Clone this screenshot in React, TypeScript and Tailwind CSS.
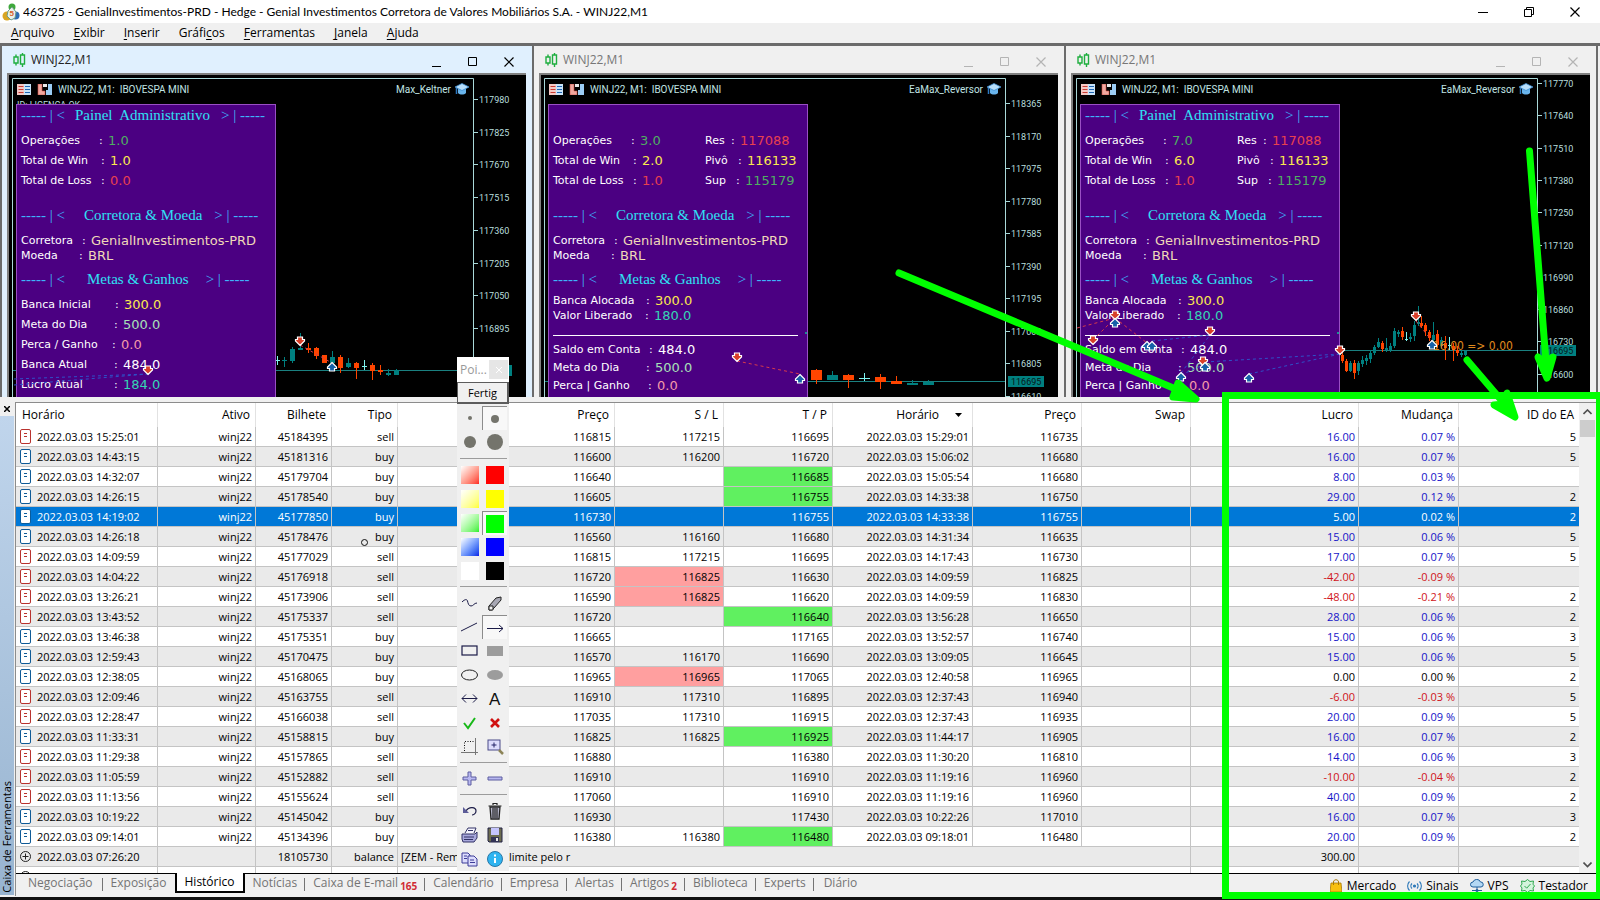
import React from "react";

type Candle = [x: number, high: number, low: number, top: number, bottom: number, kind: "u" | "d" | "n"];
type Marker = [x: number, y: number, dir: "up" | "down"];
type Trail = [x1: number, y1: number, x2: number, y2: number, color: string];

interface PanelRow {
  label: string;
  labelWidth: string;
  value: string;
  color: string;
  height: string;
  side?: { label: string; labelWidth: string; value: string; color: string };
}

interface ChartData {
  active?: boolean;
  expert: string;
  license?: boolean;
  prices: number[];
  firstTick: number;
  tickStep: number;
  priceLine: number;
  candleWidth: number;
  candles: Candle[];
  markers: Marker[];
  trails: Trail[];
  adminTitle: boolean;
  totals: PanelRow[];
  goals: PanelRow[];
  balances: PanelRow[];
  note?: string;
}

const GREEN = "text-[#4fae62]";
const YELLOW = "text-[#fbe94e]";
const RED = "text-[#e8414f]";
const WHITE = "text-white";
const PALE = "text-[#a8e0b8]";
const PINK = "text-[#f49aa8]";
const TEAL = "text-[#35d6b4]";
const BLUE_LINE = "#2f50c8";
const RED_LINE = "#d83a4a";

const totals = (ops: string, win: string, loss: string): PanelRow[] => [
  { label: "Operações", labelWidth: "w-[78px]", value: ops, color: GREEN, height: "h-5" },
  { label: "Total de Win", labelWidth: "w-[80px]", value: win, color: YELLOW, height: "h-5" },
  { label: "Total de Loss", labelWidth: "w-[80px]", value: loss, color: RED, height: "h-5" },
];

const withPivots = (rows: PanelRow[]): PanelRow[] => [
  { ...rows[0], side: { label: "Res", labelWidth: "w-[26px]", value: "117088", color: RED } },
  { ...rows[1], side: { label: "Pivô", labelWidth: "w-[33px]", value: "116133", color: YELLOW } },
  { ...rows[2], side: { label: "Sup", labelWidth: "w-[31px]", value: "115179", color: GREEN } },
];

const allocated: PanelRow[] = [
  { label: "Banca Alocada", labelWidth: "w-[93px]", value: "300.0", color: YELLOW, height: "h-[15px]" },
  { label: "Valor Liberado", labelWidth: "w-[92px]", value: "180.0", color: TEAL, height: "h-[15px]" },
];

const accountRows: PanelRow[] = [
  { label: "Saldo em Conta", labelWidth: "w-[96px]", value: "484.0", color: WHITE, height: "h-[18px]" },
  { label: "Meta do Dia", labelWidth: "w-[93px]", value: "500.0", color: PALE, height: "h-[18px]" },
  { label: "Perca | Ganho", labelWidth: "w-[95px]", value: "0.0", color: PINK, height: "h-[18px]" },
];

const charts: ChartData[] = [
  {
    active: true,
    expert: "Max_Keltner",
    license: true,
    prices: [117980, 117825, 117670, 117515, 117360, 117205, 117050, 116895],
    firstTick: 24,
    tickStep: 32.7,
    priceLine: 295,
    candleWidth: 5,
    candles: [
      [268, 281, 290, 285, 286, "n"], [275, 282, 292, 285, 286, "u"], [283, 272, 288, 274, 286, "u"],
      [291, 258, 275, 273, 275, "u"], [299, 268, 278, 273, 275, "d"], [307, 272, 284, 273, 281, "d"],
      [315, 280, 288, 280, 288, "d"], [323, 276, 290, 282, 288, "u"], [331, 280, 298, 282, 293, "d"],
      [339, 283, 293, 288, 292, "u"], [347, 287, 304, 288, 293, "d"], [355, 285, 295, 291, 292, "n"],
      [363, 288, 305, 290, 296, "d"], [371, 290, 300, 295, 297, "d"], [379, 294, 301, 298, 300, "u"],
      [387, 294, 300, 295, 300, "u"],
    ],
    markers: [[291, 266, "down"], [323, 292, "up"], [139, 295, "down"]],
    trails: [[5, 304, 139, 299, BLUE_LINE], [5, 310, 139, 299, BLUE_LINE], [291, 270, 323, 288, RED_LINE]],
    adminTitle: true,
    totals: totals("1.0", "1.0", "0.0"),
    goals: [
      { label: "Banca Inicial", labelWidth: "w-[94px]", value: "300.0", color: YELLOW, height: "h-5" },
      { label: "Meta do Dia", labelWidth: "w-[93px]", value: "500.0", color: PALE, height: "h-5" },
      { label: "Perca / Ganho", labelWidth: "w-[91px]", value: "0.0", color: PINK, height: "h-5" },
      { label: "Banca Atual", labelWidth: "w-[93px]", value: "484.0", color: WHITE, height: "h-5" },
      { label: "Lucro Atual", labelWidth: "w-[93px]", value: "184.0", color: TEAL, height: "h-5" },
    ],
    balances: [],
  },
  {
    expert: "EaMax_Reversor",
    prices: [118365, 118170, 117975, 117780, 117585, 117390, 117195, 117000, 116805, 116610],
    firstTick: 28,
    tickStep: 32.5,
    priceLine: 306,
    candleWidth: 11,
    candles: [
      [275, 294, 309, 295, 305, "d"], [291, 296, 305, 300, 305, "u"], [307, 299, 313, 300, 305, "d"],
      [323, 298, 306, 303, 304, "n"], [339, 299, 314, 302, 307, "d"], [355, 301, 309, 306, 309, "d"],
      [371, 305, 310, 308, 310, "u"], [387, 305, 310, 307, 310, "u"],
    ],
    markers: [[196, 282, "down"], [259, 304, "up"]],
    trails: [[196, 286, 259, 299, RED_LINE]],
    adminTitle: false,
    totals: withPivots(totals("3.0", "2.0", "1.0")),
    goals: allocated,
    balances: accountRows,
  },
  {
    expert: "EaMax_Reversor",
    prices: [117770, 117640, 117510, 117380, 117250, 117120, 116990, 116860, 116730, 116600],
    firstTick: 8,
    tickStep: 32.3,
    priceLine: 275,
    candleWidth: 3,
    candles: [
      [269, 277, 288, 280, 286, "d"], [273, 284, 297, 286, 296, "d"], [277, 286, 297, 288, 296, "u"],
      [281, 285, 304, 288, 298, "d"], [285, 286, 300, 288, 296, "u"], [289, 281, 292, 285, 289, "u"],
      [293, 280, 290, 283, 286, "u"], [297, 275, 288, 278, 284, "u"], [301, 270, 280, 272, 278, "u"],
      [305, 263, 273, 267, 272, "u"], [309, 266, 277, 268, 274, "d"], [313, 263, 277, 273, 275, "u"],
      [317, 268, 277, 271, 275, "u"], [321, 253, 273, 256, 271, "u"], [325, 255, 262, 257, 259, "u"],
      [329, 252, 265, 256, 262, "d"], [333, 257, 266, 264, 265, "n"], [337, 258, 267, 262, 264, "u"],
      [341, 246, 266, 250, 261, "u"], [345, 231, 251, 247, 249, "u"], [348, 241, 253, 248, 251, "d"],
      [352, 248, 261, 250, 256, "d"], [356, 255, 266, 257, 263, "d"], [360, 247, 273, 260, 265, "u"],
      [364, 255, 273, 259, 270, "d"], [368, 262, 274, 265, 271, "u"], [372, 261, 285, 268, 273, "d"],
      [376, 262, 275, 270, 271, "n"], [380, 268, 286, 271, 275, "d"], [384, 271, 281, 275, 278, "d"],
      [388, 275, 282, 278, 280, "u"], [392, 275, 281, 276, 280, "u"],
    ],
    markers: [
      [42, 240, "down"], [42, 248, "up"], [20, 265, "down"], [74, 271, "up"], [79, 271, "up"], [137, 256, "down"],
      [130, 286, "down"], [132, 292, "up"], [108, 302, "up"], [176, 303, "up"], [267, 275, "down"],
      [343, 241, "down"], [359, 270, "up"],
    ],
    trails: [
      [4, 253, 42, 243, RED_LINE], [20, 265, 42, 243, RED_LINE], [42, 243, 74, 268, RED_LINE],
      [79, 266, 137, 260, BLUE_LINE], [108, 298, 137, 260, BLUE_LINE], [132, 287, 267, 279, BLUE_LINE],
      [176, 299, 267, 279, BLUE_LINE], [108, 300, 130, 290, BLUE_LINE], [343, 246, 359, 266, RED_LINE],
    ],
    adminTitle: true,
    totals: withPivots(totals("7.0", "6.0", "1.0")),
    goals: allocated,
    balances: accountRows,
    note: "16.00 => 0.00",
  },
];

interface Deal {
  opened: string;
  ticket: string;
  type: "buy" | "sell";
  price: string;
  sl: string;
  tp: string;
  closed: string;
  closePrice: string;
  profit: string;
  change: string;
  ea: string;
  hit?: "sl" | "tp";
  selected?: boolean;
}

const deal = (line: string): Deal => {
  const [opened, ticket, type, price, sl, tp, closed, closePrice, profit, change, ea, flag] = line.split("|");
  return {
    opened, ticket, type: type as Deal["type"], price, sl, tp, closed, closePrice, profit, change, ea,
    hit: flag === "sl" || flag === "tp" ? flag : undefined,
    selected: flag === "selected",
  };
};

const deals: Deal[] = [
  "15:25:01|45184395|sell|116815|117215|116695|15:29:01|116735|16.00|0.07|5|",
  "14:43:15|45181316|buy|116600|116200|116720|15:06:02|116680|16.00|0.07|5|",
  "14:32:07|45179704|buy|116640||116685|15:05:54|116680|8.00|0.03||tp",
  "14:26:15|45178540|buy|116605||116755|14:33:38|116750|29.00|0.12|2|tp",
  "14:19:02|45177850|buy|116730||116755|14:33:38|116755|5.00|0.02|2|selected",
  "14:26:18|45178476|buy|116560|116160|116680|14:31:34|116635|15.00|0.06|5|",
  "14:09:59|45177029|sell|116815|117215|116695|14:17:43|116730|17.00|0.07|5|",
  "14:04:22|45176918|sell|116720|116825|116630|14:09:59|116825|-42.00|-0.09||sl",
  "13:26:21|45173906|sell|116590|116825|116620|14:09:59|116830|-48.00|-0.21|2|sl",
  "13:43:52|45175337|sell|116720||116640|13:56:28|116650|28.00|0.06|2|tp",
  "13:46:38|45175351|buy|116665||117165|13:52:57|116740|15.00|0.06|3|",
  "12:59:43|45170475|buy|116570|116170|116690|13:09:05|116645|15.00|0.06|5|",
  "12:38:05|45168065|buy|116965|116965|117065|12:40:58|116965|0.00|0.00|2|sl",
  "12:09:46|45163755|sell|116910|117310|116895|12:37:43|116940|-6.00|-0.03|5|",
  "12:28:47|45166038|sell|117035|117310|116915|12:37:43|116935|20.00|0.09|5|",
  "11:33:31|45158815|buy|116825|116825|116925|11:44:17|116905|16.00|0.07|2|tp",
  "11:29:38|45157865|sell|116880||116380|11:30:20|116810|14.00|0.06|3|",
  "11:05:59|45152882|sell|116910||116910|11:19:16|116960|-10.00|-0.04|2|",
  "11:13:56|45155624|sell|117060||116910|11:19:16|116960|40.00|0.09|2|",
  "10:19:22|45145042|buy|116930||117430|10:22:26|117010|16.00|0.07|3|",
  "09:14:01|45134396|buy|116380|116380|116480|09:18:01|116480|20.00|0.09|2|tp",
].map(deal);

const menus: [string, string, string][] = [
  ["", "A", "rquivo"],
  ["", "E", "xibir"],
  ["", "I", "nserir"],
  ["Gráfi", "c", "os"],
  ["", "F", "erramentas"],
  ["", "J", "anela"],
  ["", "A", "juda"],
];

const tabs: { name: string; count?: string }[] = [
  { name: "Negociação" },
  { name: "Exposição" },
  { name: "Histórico" },
  { name: "Notícias" },
  { name: "Caixa de E-mail", count: "165" },
  { name: "Calendário" },
  { name: "Empresa" },
  { name: "Alertas" },
  { name: "Artigos", count: "2" },
  { name: "Biblioteca" },
  { name: "Experts" },
  { name: "Diário" },
];

const AppLogo = () => (
  <svg width="18" height="18" viewBox="0 0 18 18" aria-hidden="true">
    <circle cx="10" cy="4" r="3.5" fill="#3fa83c" />
    <circle cx="5" cy="13" r="4.5" fill="#d9a521" />
    <circle cx="13.5" cy="12.5" r="4" fill="#2c6cb4" />
    <path d="M10 4l4 5-1 6-4 2-4-4 1-5z" fill="#e8f2ec" stroke="#6f9c8a" />
    <text x="7.5" y="13" fontSize="8" fontWeight="bold" fill="#d8622a" fontFamily="Liberation Sans">5</text>
  </svg>
);

const CandlesIcon = () => (
  <svg width="13" height="14" viewBox="0 0 13 14" fill="none" stroke="#1fae3f" strokeWidth="1.4" aria-hidden="true">
    <path d="M3 1.500v2.500M3 10v2.500M9.500 0v2M9.500 11v3M1 4h4v6H1zM7.500 2h4v9h-4z" />
  </svg>
);

const MinIcon = ({ low }: { low?: boolean }) => (
  <svg width="10" height="10" viewBox="0 0 10 10" stroke="currentColor" aria-hidden="true">
    <path d={low ? "M0 9.500h9" : "M0 5.500h10"} />
  </svg>
);

const MaxIcon = () => (
  <svg width="10" height="10" viewBox="0 0 10 10" fill="none" stroke="currentColor" aria-hidden="true">
    <path d="M.5.5h8v8h-8z" />
  </svg>
);

const CloseIcon = () => (
  <svg width="10" height="10" viewBox="0 0 10 10" stroke="currentColor" strokeWidth="1.200" aria-hidden="true">
    <path d="M.5.5l9 9M9.500.5l-9 9" />
  </svg>
);

const TitleBar = () => (
  <header className="flex h-[23px] items-center bg-white pl-[2px] pr-5 text-black">
    <AppLogo />
    <h1 className="ml-[3px] flex-1 truncate font-[Lato,sans-serif] text-xs">
      463725 - GenialInvestimentos-PRD - Hedge - Genial Investimentos Corretora de Valores Mobiliários S.A. - WINJ22,M1
    </h1>
    <div className="flex items-center gap-9">
      <button type="button" aria-label="Minimizar"><MinIcon /></button>
      <button type="button" aria-label="Restaurar">
        <svg width="10" height="10" viewBox="0 0 10 10" fill="none" stroke="currentColor" aria-hidden="true">
          <path d="M.5 2.500h7v7h-7zM2.500 2.500v-2h7v7h-2" />
        </svg>
      </button>
      <button type="button" aria-label="Fechar"><CloseIcon /></button>
    </div>
  </header>
);

const MenuBar = () => (
  <nav className="flex h-5 items-center gap-[19px] bg-[#f0f0f0] pl-[11px] text-xs text-black">
    {menus.map(([before, key, after]) => (
      <button type="button" key={key + after}>
        {before}
        <span className="underline underline-offset-2">{key}</span>
        {after}
      </button>
    ))}
  </nav>
);

const PanelHeading = ({ text, gap, tail }: { text: string; gap: string; tail: string }) => (
  <h3 className="flex h-5 items-center whitespace-pre font-['Liberation_Serif',serif] text-[15px] leading-5 text-[#2fe0f4]">
    <span className="w-[46px] shrink-0 text-[#3fb4fa]">----- | &lt;</span>
    <span className={gap}>{text}</span>
    <span className={`${tail} text-[#3fb4fa]`}>&gt; | -----</span>
  </h3>
);

const Row = ({ row }: { row: PanelRow }) => (
  <div className={`flex items-center whitespace-nowrap text-[11px] text-white ${row.height}`}>
    <div className="flex w-[152px] shrink-0 items-center">
      <span className={`shrink-0 ${row.labelWidth}`}>{row.label}</span>
      <span className="w-[9px] shrink-0">:</span>
      <span className={`text-[13px] ${row.color}`}>{row.value}</span>
    </div>
    {row.side && (
      <div className="flex items-center">
        <span className={row.side.labelWidth}>{row.side.label}</span>
        <span className="w-[9px]">:</span>
        <span className={`text-[13px] ${row.side.color}`}>{row.side.value}</span>
      </div>
    )}
  </div>
);

const AdminPanel = ({ chart }: { chart: ChartData }) => (
  <section className="absolute left-[7px] top-[29px] h-[300px] w-[260px] border border-[#9a4fc4] bg-[#4b0082] pl-[4px] font-['DejaVu_Sans',sans-serif] leading-4">
    <div className="mb-1 h-[22px]">
      {chart.adminTitle && <PanelHeading text="Painel  Administrativo" gap="ml-[8px]" tail="ml-[11px]" />}
    </div>
    {chart.totals.map((row) => <Row key={row.label} row={row} />)}
    <div className="mt-[14px] mb-2">
      <PanelHeading text="Corretora & Moeda" gap="ml-[17px]" tail="ml-[12px]" />
    </div>
    <Row row={{ label: "Corretora", labelWidth: "w-[61px]", value: "GenialInvestimentos-PRD", color: "text-[#f0d8b8]", height: "h-[15px]" }} />
    <Row row={{ label: "Moeda", labelWidth: "w-[58px]", value: "BRL", color: "text-[#f0d8b8]", height: "h-[15px]" }} />
    <div className="mt-[6px]">
      <PanelHeading text="Metas & Ganhos" gap="ml-[20px]" tail="ml-[17px]" />
    </div>
    <div className={chart.balances.length ? "mt-1" : "mt-[6px]"}>
      {chart.goals.map((row) => <Row key={row.label} row={row} />)}
    </div>
    {chart.balances.length > 0 && (
      <div className="mt-3 w-[245px] border-t border-white pt-[5px]">
        {chart.balances.map((row) => <Row key={row.label} row={row} />)}
      </div>
    )}
  </section>
);

const candleColor = { u: "#008080", d: "#ff4500", n: "#7ff4f0" };

const PriceChart = ({ chart }: { chart: ChartData }) => (
  <svg className="absolute left-0 top-0" width="517" height="322" viewBox="0 0 517 322" aria-hidden="true">
    <path d="M3.500 322V3.500H464.500V322" fill="none" stroke="#a9d8d8" />
    <g fontFamily="Roboto, sans-serif" fontSize="9" fill="#b8dede">
      {chart.prices.map((price, i) => {
        const y = Math.round(chart.firstTick + i * chart.tickStep);
        return (
          <g key={price}>
            <path d={`M465 ${y + 0.5}h4`} stroke="#a9d8d8" />
            <text x="470" y={y + 4}>{price}</text>
          </g>
        );
      })}
      <path d={`M4 ${chart.priceLine + 0.5}H464`} stroke="#1a8080" />
      <rect x="467" y={chart.priceLine - 5} width="36" height="11" fill="#008080" />
      <text x="470" y={chart.priceLine + 4} fill="#061818">116695</text>
      {chart.license && <text x="8" y="33">ID: LICENÇA OK</text>}
    </g>
    {chart.candles.map(([x, high, low, top, bottom, kind]) => (
      <g key={x} fill={candleColor[kind]}>
        <rect x={x} y={high} width="1" height={low - high} />
        <rect x={x - Math.floor(chart.candleWidth / 2)} y={top} width={chart.candleWidth} height={bottom - top} />
      </g>
    ))}
    {chart.note && (
      <text x="360" y="275" fontFamily="DejaVu Sans Condensed, DejaVu Sans" fontSize="12" fill="#e08a1e">{chart.note}</text>
    )}
  </svg>
);

const TradeMarks = ({ chart }: { chart: ChartData }) => (
  <svg className="absolute left-0 top-0" width="517" height="322" viewBox="0 0 517 322" aria-hidden="true">
    {chart.trails.map(([x1, y1, x2, y2, color]) => (
      <line key={`${x1}-${y1}-${x2}`} x1={x1} y1={y1} x2={x2} y2={y2} stroke={color} strokeDasharray="3 3" />
    ))}
    {chart.markers.map(([x, y, dir]) => (
      <g key={`${x}-${y}`} transform={`translate(${x} ${y}) scale(1 ${dir === "up" ? 1 : -1})`}>
        <path d="M0-4.500L4.500 0V1.500H2.500V4H-2.500V1.500H-4.500V0z" fill={dir === "up" ? "#1661a8" : "#d8402a"} stroke="#fff" strokeWidth="1.200" />
      </g>
    ))}
    {!chart.active && <rect x="264" y="257" width="2" height="2" fill="#1a9090" />}
  </svg>
);

const ChartWindow = ({ chart }: { chart: ChartData }) => (
  <article className={`flex min-w-0 flex-1 flex-col border-r-2 border-[#6b6b6b] pl-[5px] pr-[6px] ${chart.active ? "bg-[#e0f0fe]" : "bg-[#f0f0f0]"}`}>
    <header className="flex h-[27px] items-center pl-[6px] pr-3">
      <CandlesIcon />
      <h2 className={`ml-[5px] flex-1 text-xs ${chart.active ? "text-[#222]" : "text-[#777]"}`}>WINJ22,M1</h2>
      <div className={`mt-1 flex gap-[26px] ${chart.active ? "text-black" : "text-[#b4b4b4]"}`}>
        <button type="button" aria-label="Minimizar"><MinIcon low /></button>
        <button type="button" aria-label="Maximizar"><MaxIcon /></button>
        <button type="button" aria-label="Fechar"><CloseIcon /></button>
      </div>
    </header>
    <div className="relative min-h-0 flex-1 overflow-hidden border-l-2 border-t-2 border-[#808080] bg-black">
      <PriceChart chart={chart} />
      <div className="relative flex h-7 w-[464px] items-center pl-[8px] pr-1 font-[Roboto,sans-serif] text-[10px] text-[#c0e4e4]">
        <svg width="35" height="11" viewBox="0 0 35 11" aria-hidden="true">
          <rect width="7" height="11" fill="#f5c9c4" />
          <rect x="7" width="7" height="11" fill="#c9e4fa" />
          <path d="M1.500 2.500h5M1.500 5.500h5M1.500 8.500h5" stroke="#c83a32" />
          <path d="M8 2.500h5M8 5.500h5M8 8.500h5" stroke="#1f66b4" />
          <path d="M21 0h4v7h3v4h-7z" fill="#f0a8a0" stroke="#d24a40" strokeWidth=".6" />
          <path d="M31 0h4v11h-6V6h2z" fill="#9ccdf5" />
          <path d="M26 0h4v3h-4z" fill="#e8e8e8" />
        </svg>
        <span className="ml-[6px] flex-1 whitespace-pre">WINJ22, M1:  IBOVESPA MINI</span>
        <span>{chart.expert}</span>
        <svg className="ml-1" width="14" height="12" viewBox="0 0 14 12" aria-hidden="true">
          <path d="M3 5v5c2 2 6 2 8 0V5z" fill="#69b4ec" />
          <path d="M0 4l7-3.500L14 4 7 7.500z" fill="#b8dffb" stroke="#3c8fd4" strokeWidth=".8" />
          <path d="M1.500 5v6" stroke="#2c78c0" strokeWidth="1.500" />
        </svg>
      </div>
      <AdminPanel chart={chart} />
      <TradeMarks chart={chart} />
    </div>
  </article>
);

const DocIcon = ({ color }: { color: string }) => (
  <svg width="12" height="15" viewBox="0 0 12 15" fill="none" stroke={color} aria-hidden="true">
    <rect x=".5" y=".5" width="10" height="14" rx="1.500" fill="#fff" />
    <path d="M4 4.500h3M4 7.500h3" />
  </svg>
);

const BalanceIcon = () => (
  <svg width="12" height="12" viewBox="0 0 12 12" fill="none" stroke="#222" aria-hidden="true">
    <circle cx="5.500" cy="5.500" r="5" />
    <path d="M2.500 5.500h6M5.500 2.500v6" />
  </svg>
);

const cell = "h-5 border-b border-r border-[#c4c4c4] p-0 pr-[3px] text-right last:border-r-0";
const headCell = "h-6 border-r border-[#e2e2e2] p-0 pr-[5px] text-right font-normal last:border-r-0";

const DealRow = ({ row, index }: { row: Deal; index: number }) => {
  const amount = Number(row.profit);
  const tone = row.selected ? "" : amount > 0 ? "text-[#1414c8]" : amount < 0 ? "text-[#d01420]" : "";
  return (
    <tr className={row.selected ? "bg-[#0078d7] text-white" : index % 2 ? "bg-[#eaeaea]" : "bg-white"}>
      <td className={cell}>
        <div className="flex items-center gap-[5px] pl-1">
          <DocIcon color={row.selected ? "#0a5c9c" : row.type === "buy" ? "#0f5a96" : "#b8322e"} />
          2022.03.03 {row.opened}
        </div>
      </td>
      <td className={cell}>winj22</td>
      <td className={cell}>{row.ticket}</td>
      <td className={cell}>{row.type}</td>
      <td className={cell}>{row.price}</td>
      <td className={`${cell} ${row.hit === "sl" ? "bg-[#ff9f9f]" : ""}`}>{row.sl}</td>
      <td className={`${cell} ${row.hit === "tp" ? "bg-[#60f060]" : ""}`}>{row.tp}</td>
      <td className={cell}>2022.03.03 {row.closed}</td>
      <td className={cell}>{row.closePrice}</td>
      <td className={cell}></td>
      <td className={`${cell} ${tone}`}>{row.profit}</td>
      <td className={`${cell} ${tone}`}>{row.change} %</td>
      <td className={cell}>{row.ea}</td>
    </tr>
  );
};

interface BalanceProps {
  date: string;
  ticket: string;
  amount: string;
  shade: string;
  start: string;
  end: string;
}

const BalanceRow = ({ date, ticket, amount, shade, start, end }: BalanceProps) => (
  <tr className={shade}>
    <td className={cell}>
      <div className="flex items-center gap-[5px] pl-1"><BalanceIcon />{date}</div>
    </td>
    <td className={cell}></td>
    <td className={cell}>{ticket}</td>
    <td className={cell}>balance</td>
    <td className={cell} colSpan={6}>
      <div className="flex pl-[3px]">
        <span className="w-[108px] text-left">{start}</span>
        <span>{end}</span>
      </div>
    </td>
    <td className={cell}>{amount}</td>
    <td className={cell}></td>
    <td className={cell}></td>
  </tr>
);

const HistoryTable = () => (
  <table className="w-full table-fixed border-separate border-spacing-0 text-[11px] leading-4 text-black">
    <colgroup>
      <col className="w-[142px]" />
      <col className="w-[98px]" />
      <col className="w-[76px]" />
      <col className="w-[66px]" />
      <col />
      <col className="w-[109px]" />
      <col className="w-[109px]" />
      <col className="w-[140px]" />
      <col className="w-[109px]" />
      <col className="w-[109px]" />
      <col className="w-[168px]" />
      <col className="w-[100px]" />
      <col className="w-[120px]" />
    </colgroup>
    <thead className="bg-white text-xs">
      <tr>
        <th className={headCell}><div className="pl-[6px] text-left">Horário</div></th>
        <th className={headCell}>Ativo</th>
        <th className={headCell}>Bilhete</th>
        <th className={headCell}>Tipo</th>
        <th className={headCell}>Preço</th>
        <th className={headCell}>S / L</th>
        <th className={headCell}>T / P</th>
        <th className={headCell}>
          <div className="flex items-center justify-end gap-4 pr-[5px]">
            Horário
            <svg width="7" height="4" viewBox="0 0 7 4" aria-hidden="true"><path d="M0 0h7L3.500 4z" /></svg>
          </div>
        </th>
        <th className={headCell}>Preço</th>
        <th className={headCell}>Swap</th>
        <th className={headCell}>Lucro</th>
        <th className={headCell}>Mudança</th>
        <th className={headCell}>ID do EA</th>
      </tr>
    </thead>
    <tbody>
      {deals.map((row, i) => <DealRow key={row.ticket} row={row} index={i} />)}
      <BalanceRow date="2022.03.03 07:26:20" ticket="18105730" amount="300.00" shade="bg-[#eaeaea]" start="[ZEM - Remuneraç" end="limite pelo r" />
      <BalanceRow date="2022.03.02 20:21:07" ticket="18105970" amount="300.00" shade="bg-white" start="[ZEM - Remuneraç" end="limite pelo r" />
    </tbody>
  </table>
);

const Chevron = ({ down }: { down?: boolean }) => (
  <svg width="9" height="6" viewBox="0 0 9 6" fill="none" stroke="#505050" strokeWidth="1.600" aria-hidden="true">
    <path d={down ? "M.5.5l4 4 4-4" : "M.5 5l4-4 4 4"} />
  </svg>
);

const BottomTabs = () => (
  <footer className="flex h-[23px] border-t border-black bg-[#f0f0f0] text-xs text-[#747474]">
    <div className="-mt-px flex flex-1 pl-1" role="tablist">
      {tabs.map(({ name, count }, i) => {
        const active = name === "Histórico";
        const divider = i !== 1 && !active && i < tabs.length - 1;
        return (
          <button
            type="button"
            role="tab"
            aria-selected={active}
            key={name}
            className={`relative flex h-5 items-center ${active ? "border-2 border-t-0 border-black bg-white px-2 text-black" : "px-[8px] first:pr-[10px] last:pl-[10px]"}`}
          >
            {name}
            {count && <sub className="bottom-0 ml-[2px] mt-[6px] text-[10px] font-bold leading-none text-[#d02c34]">{count}</sub>}
            {divider && <span className="absolute right-0 top-[5px] h-[13px] w-px bg-[#747474]" />}
          </button>
        );
      })}
    </div>
    <div className="flex items-center gap-[11px] pr-3 pt-px text-black">
      <button type="button" className="flex items-center gap-[5px]">
        <svg width="12" height="13" viewBox="0 0 12 13" aria-hidden="true">
          <path d="M1 4h10l1 9H0z" fill="#f8c010" stroke="#a87808" strokeWidth=".8" />
          <path d="M3.500 6V3c0-3 5-3 5 0v3" fill="none" stroke="#a87808" />
        </svg>
        Mercado
      </button>
      <button type="button" className="flex items-center gap-1">
        <svg width="15" height="10" viewBox="0 0 15 10" fill="none" stroke="#2c78b8" strokeWidth="1.100" aria-hidden="true">
          <path d="M2.500.5C0 3 0 7 2.500 9.500M5 2.500c-1.500 1.500-1.500 3.500 0 5M10 2.500c1.500 1.500 1.500 3.500 0 5M12.500.5c2.500 2.500 2.500 6.500 0 9" />
          <circle cx="7.500" cy="5" r="1" fill="#2c78b8" />
        </svg>
        Sinais
      </button>
      <button type="button" className="flex items-center gap-1">
        <svg width="14" height="13" viewBox="0 0 14 13" aria-hidden="true">
          <path d="M3 8a2.500 2.500 0 010-5 4 4 0 017.500 0A2.500 2.500 0 0111 8z" fill="#b4d8f4" stroke="#1f5f9c" />
          <path d="M7 8v3M2 11.500h10" stroke="#1f5f9c" />
          <circle cx="7" cy="11.500" r="1.500" fill="#1f5f9c" />
        </svg>
        VPS
      </button>
      <button type="button" className="flex items-center gap-1">
        <svg width="15" height="14" viewBox="0 0 15 14" fill="none" stroke="#2fa84f" aria-hidden="true">
          <path d="M5 2.500L7.500.5 10 2.500l3.500-.5-.5 3.200L14.500 7 13 9l.5 3-3.500-.5-2.500 2-2.500-2-3.500.5.5-3L.5 7 2 5l-.5-3z" fill="#d4f4dc" />
          <path d="M4.500 7l2.200 2.200L10.500 5" />
        </svg>
        Testador
      </button>
    </div>
  </footer>
);

const Toolbox = () => (
  <section className="flex min-h-0 flex-1 bg-[#f0f0f0] pt-[5px]">
    <aside className="flex w-[15px] shrink-0 flex-col pb-px pr-px">
      <button type="button" aria-label="Fechar caixa" className="flex h-[14px] items-center justify-center text-black">
        <svg width="6" height="6" viewBox="0 0 6 6" stroke="currentColor" strokeWidth="1.500"><path d="M0 0l6 6M6 0L0 6" /></svg>
      </button>
      <div className="flex flex-1 flex-col justify-end bg-gradient-to-b from-[#c0d5ec] to-[#98b4d0] pb-[2px]">
        <span className="rotate-180 whitespace-nowrap text-[11px] leading-[14px] text-black [writing-mode:vertical-rl]">Caixa de Ferramentas</span>
      </div>
    </aside>
    <div className="flex min-h-0 min-w-0 flex-1 flex-col border-l border-t border-[#8c8c8c]">
      <div className="flex min-h-0 flex-1">
        <div className="min-w-0 flex-1 overflow-hidden bg-white"><HistoryTable /></div>
        <div className="flex w-[17px] flex-col items-center bg-[#f0f0f0]">
          <button type="button" aria-label="Rolar para cima" className="flex h-[17px] items-center"><Chevron /></button>
          <div className="h-[17px] w-[15px] bg-[#cdcdcd]" />
          <div className="flex-1" />
          <button type="button" aria-label="Rolar para baixo" className="flex h-[17px] items-center"><Chevron down /></button>
        </div>
        <div className="w-1 bg-[#f0f0f0]" />
      </div>
      <BottomTabs />
    </div>
  </section>
);

const INK = "#1c1c48";

const tools: { name: string; drawing: React.ReactNode; pressed?: boolean }[] = [
  { name: "Freihand", drawing: <path d="M1 8c3-3 5-3 5.500-1s1 5 3.500 5 3-3 6-3" stroke={INK} /> },
  { name: "Radierer", drawing: <><path d="M3 12l7-8 5-1v3l-7 8-2 2H3z" fill="#a8a8b4" stroke="#222" /><path d="M3 12h4v4H3z" fill="#f0f0f0" stroke="#222" /></> },
  { name: "Linie", drawing: <path d="M0 13l16-8" stroke={INK} /> },
  { name: "Pfeil", pressed: true, drawing: <path d="M1 9.500h16M13 6l4 3.500-4 3.500" stroke={INK} /> },
  { name: "Rechteck", drawing: <rect x="1" y="4" width="15" height="9" stroke={INK} strokeWidth="1.200" /> },
  { name: "Rechteck gefüllt", drawing: <rect x="1" y="4" width="16" height="10" fill="#9c9c9c" /> },
  { name: "Ellipse", drawing: <ellipse cx="8.500" cy="9" rx="8" ry="5" stroke="#222" /> },
  { name: "Ellipse gefüllt", drawing: <ellipse cx="9" cy="9" rx="8" ry="5" fill="#9c9c9c" /> },
  { name: "Doppelpfeil", drawing: <path d="M1 8.500h15M5 4.500l-4 4 4 4M12 4.500l4 4-4 4" stroke={INK} /> },
  { name: "Text", drawing: <text x="3" y="15" fontSize="17" fill="#111" fontFamily="Liberation Sans">A</text> },
  { name: "Haken", drawing: <path d="M3 9l4 5 7-10" stroke="#18b818" strokeWidth="2" /> },
  { name: "Kreuz", drawing: <path d="M5 5l8 8M13 5l-8 8" stroke="#d01010" strokeWidth="2.600" /> },
  { name: "Zuschneiden", drawing: <><path d="M3.500 13V3.500H14" stroke="#111" strokeDasharray="1 1.500" /><path d="M0 14.500h17M14.500 0v17" stroke="#777" /></> },
  { name: "Zoom", drawing: <><rect x="2" y="2" width="12" height="10" fill="#dcdcfc" stroke="#4a4a88" /><path d="M5.500 7h5M8 4.500v5" stroke="#222266" /><path d="M13 12l4 4" stroke="#8c8458" strokeWidth="2.500" /></> },
];

const zoomTools: typeof tools = [
  { name: "Mehr", drawing: <path d="M7 2h3v5h5v3h-5v5H7v-5H2V7h5z" fill="#b8b8f0" stroke="#5c5ca0" /> },
  { name: "Weniger", drawing: <path d="M2 7h14v3H2z" fill="#b8b8f0" stroke="#5c5ca0" /> },
];

const fileTools: typeof tools = [
  { name: "Rückgängig", drawing: <><path d="M5 9c3-5 10-4 10 0 0 3-3 4-4 4" stroke={INK} strokeWidth="1.200" /><path d="M2 5v6h6z" fill="#5c5c98" /></> },
  { name: "Löschen", drawing: <><path d="M4 5h10l-1 12H5z" fill="#b8b8cc" stroke="#222" strokeWidth="1.300" /><path d="M2.500 4h13M7 3V1.500h4V3M7 6v10M9 6v10M11 6v10" stroke="#222" strokeWidth="1.200" /></> },
  { name: "Drucken", drawing: <><path d="M4 7l3-5h8l-2 5" fill="#f4f4ff" stroke="#333366" /><path d="M1 8h13l2-2v6l-3 4H2l-1-3z" fill="#a8a8dc" stroke="#333366" /><path d="M3 11h10M3 13.500h9M7 4.500h5" stroke="#333366" /></> },
  { name: "Speichern", drawing: <><path d="M2 2h14v14H3l-1-1z" fill="#6c6c50" stroke="#222244" /><path d="M5 2h8v7H5z" fill="#c4c4fc" /><path d="M5 11h8v5H5z" fill="#333355" /><path d="M10 12h2v3h-2z" fill="#e8e8e8" /></> },
  { name: "Kopieren", drawing: <><path d="M1 3h6l2 2v8H1z" fill="#dcdcfc" stroke="#3c3c98" /><path d="M7 6h6l3 3v7H7z" fill="#dcdcfc" stroke="#3c3c98" /><path d="M3 6h3M3 8.500h3M9 10h4M9 12.500h5" stroke="#3c3c98" /></> },
  { name: "Info", drawing: <><circle cx="9" cy="9" r="7.500" fill="#30b4f0" stroke="#2878a8" /><path d="M9 8v5M9 4.500v2" stroke="#fff" strokeWidth="2" /></> },
];

const pressedCell = "border-l border-t border-[#8c8c8c] bg-[#f8f8f8]";

const ToolGrid = ({ items }: { items: typeof tools }) => (
  <div className="grid grid-cols-2">
    {items.map(({ name, drawing, pressed }) => (
      <button type="button" key={name} aria-label={name} className={`flex h-6 items-center justify-center ${pressed ? pressedCell : ""}`}>
        <svg width="18" height="18" viewBox="0 0 18 18" fill="none">{drawing}</svg>
      </button>
    ))}
  </div>
);

const Divider = () => <hr className="mb-1 mt-[3px] ml-[3px] border-0 border-t border-[#9c9c9c]" />;

const swatches = [
  ["Rot hell", "bg-gradient-to-br from-white to-[#ff2020]"],
  ["Rot", "bg-[#ff0000]"],
  ["Gelb hell", "bg-gradient-to-br from-white to-[#ffff20]"],
  ["Gelb", "bg-[#ffff00]"],
  ["Grün hell", "bg-gradient-to-br from-white to-[#20f020]"],
  ["Grün", "bg-[#00ff00]"],
  ["Blau hell", "bg-gradient-to-br from-white to-[#1818e8]"],
  ["Blau", "bg-[#0000ff]"],
  ["Weiß", "bg-white"],
  ["Schwarz", "bg-black"],
];

const dots = [
  ["Sehr dünn", "size-1"],
  ["Dünn", "size-2"],
  ["Mittel", "size-3"],
  ["Dick", "size-4"],
];

const Palette = () => (
  <aside className="absolute left-[457px] top-[357px] w-[52px] bg-[#f0f0f0] text-black">
    <div className="flex h-[25px] items-center justify-between bg-white pl-[3px] pr-px">
      <span className="text-xs text-[#999]">Poi...</span>
      <button type="button" aria-label="Schließen" className="flex h-[19px] w-[19px] items-center justify-center bg-[#e6e6e6] text-white">
        <svg width="6" height="6" viewBox="0 0 6 6" stroke="currentColor"><path d="M0 0l6 6M6 0L0 6" /></svg>
      </button>
    </div>
    <button type="button" className="mb-[2px] block h-[22px] w-full border border-b-2 border-r-2 border-[#5c5c5c] bg-[#f0f0f0] text-[11px] leading-4">
      Fertig
    </button>
    <div className="pr-[2px]">
      <div className="grid grid-cols-2 pb-px">
        {dots.map(([name, size], i) => (
          <button type="button" key={name} aria-label={name} className={`flex h-6 items-center justify-center ${i === 1 ? pressedCell : ""}`}>
            <span className={`rounded-full bg-[#74746c] ${size}`} />
          </button>
        ))}
      </div>
      <Divider />
      <div className="grid grid-cols-2">
        {swatches.map(([name, fill]) => (
          <button type="button" key={name} aria-label={name} className={`flex h-6 items-center justify-center ${name === "Grün" ? pressedCell : ""}`}>
            <span className={`size-[18px] ${fill}`} />
          </button>
        ))}
      </div>
      <Divider />
      <ToolGrid items={tools} />
      <Divider />
      <ToolGrid items={zoomTools} />
      <Divider />
      <ToolGrid items={fileTools} />
    </div>
  </aside>
);

// Freehand marks drawn on top of the whole desktop
const Annotations = () => (
  <svg className="pointer-events-none absolute left-0 top-0" width="1600" height="900" viewBox="0 0 1600 900" fill="none" stroke="#00ff00" strokeWidth="7" aria-hidden="true">
    <path d="M1225.500 395.500H1599.500V895.500H1225.500z" />
    <g strokeLinecap="round" strokeLinejoin="round">
      <path d="M899 273L1190 395" />
      <path d="M1178 383L1196 399L1173 397z" fill="#00ff00" />
      <path d="M1529.500 151L1546 362" />
      <path d="M1538 357L1547 378L1553 357L1545 362z" fill="#00ff00" />
      <path d="M1467 360L1508 408" />
      <path d="M1494 405L1515 417L1507 393L1504 404z" fill="#00ff00" />
    </g>
    <circle cx="364.500" cy="542.500" r="3" stroke="#111" strokeWidth="1" />
  </svg>
);

const App = () => {
  return (
    <div className="relative flex h-screen min-h-[900px] w-full flex-col overflow-hidden bg-[#f0f0f0] font-['Open_Sans','Noto_Sans',sans-serif]">
      <TitleBar />
      <MenuBar />
      <main className="flex h-[354px] border-l-2 border-t-[3px] border-[#6b6b6b]">
        {charts.map((chart, i) => <ChartWindow key={i} chart={chart} />)}
        <div className="w-[2px] bg-[#f0f0f0]" />
      </main>
      <Toolbox />
      <div className="mt-px h-[3px] bg-[#111]" />
      <Palette />
      <Annotations />
    </div>
  );
};

export default App;
